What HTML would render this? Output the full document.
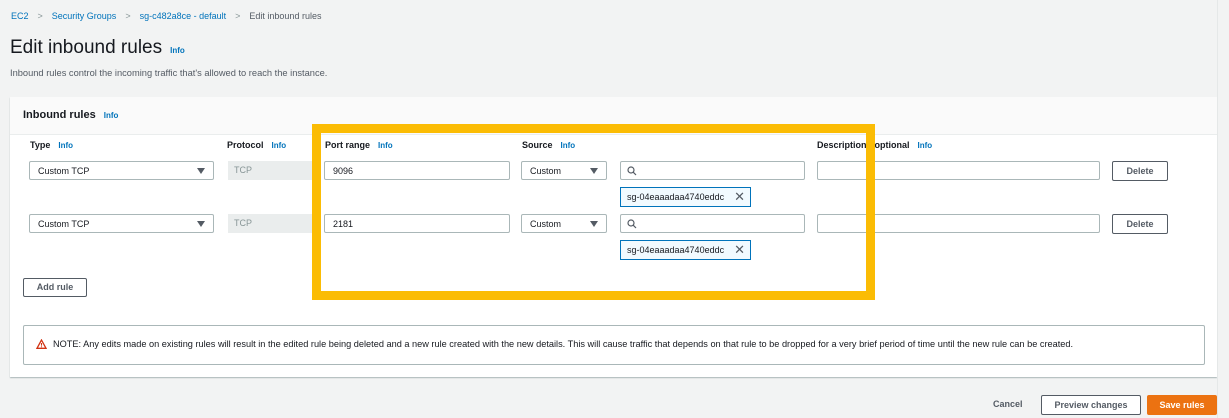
<!DOCTYPE html>
<html><head><meta charset="utf-8"><style>
*{box-sizing:border-box;margin:0;padding:0}
body{width:1229px;height:418px;background:#f2f3f3;font-family:"Liberation Sans",sans-serif;color:#16191f;position:relative;overflow:hidden;font-size:9px}
.a{position:absolute}
.lnk{color:#0073bb}
.info{color:#0073bb;font-size:8px;font-weight:bold;margin-left:8px}
.lbl{font-weight:bold;font-size:9px}
.inp{position:absolute;height:19px;border:1px solid #aab7b8;background:#fff;border-radius:2px;padding-left:8px;line-height:18px;font-size:9px}
.sel::after{content:"";position:absolute;right:8px;top:6px;border-left:4px solid transparent;border-right:4px solid transparent;border-top:6px solid #545b64}
.tok{position:absolute;height:20px;border:1px solid #0073bb;background:#f1faff;padding-left:6px;line-height:18px;font-size:9px;width:131px}
.tok span{position:absolute;right:5px;top:0;font-size:13px;color:#545b64}
.btn{position:absolute;border:1px solid #545b64;background:#fff;font-weight:bold;font-size:9px;text-align:center;color:#545b64;border-radius:2px}
</style></head><body>
<div class="a" style="left:11px;top:11px;font-size:9px"><span class="lnk">EC2</span><span style="color:#879596;margin:0 9px">&gt;</span><span class="lnk">Security Groups</span><span style="color:#879596;margin:0 9px">&gt;</span><span class="lnk">sg-c482a8ce - default</span><span style="color:#879596;margin:0 9px">&gt;</span><span style="color:#545b64">Edit inbound rules</span></div>
<div class="a" style="left:10px;top:37px;font-size:19px">Edit inbound rules<span class="info">Info</span></div>
<div class="a" style="left:10px;top:68px;font-size:9.3px;color:#545b64">Inbound rules control the incoming traffic that's allowed to reach the instance.</div>

<div class="a" style="left:10px;top:97px;width:1207px;height:280px;background:#fff;box-shadow:0 1px 1px #aab7b8">
 <div style="height:38px;background:#fafafa;border-bottom:1px solid #eaeded"></div>
</div>
<div class="a" style="left:1217px;top:0;width:1px;height:418px;background:#e5e8e8"></div>
<div class="a lbl" style="left:23px;top:109px;font-size:11px">Inbound rules<span class="info">Info</span></div>

<div class="a lbl" style="left:30px;top:140px">Type<span class="info">Info</span></div>
<div class="a lbl" style="left:227px;top:140px">Protocol<span class="info">Info</span></div>
<div class="a lbl" style="left:325px;top:140px">Port range<span class="info">Info</span></div>
<div class="a lbl" style="left:522px;top:140px">Source<span class="info">Info</span></div>
<div class="a lbl" style="left:817px;top:140px">Description - optional<span class="info">Info</span></div>

<div class="inp sel" style="left:29px;top:161px;width:185px">Custom TCP</div>
<div class="a" style="left:228px;top:161px;width:84px;height:19px;background:#eaeded;color:#879596;padding-left:6px;line-height:19px">TCP</div>
<div class="inp" style="left:324px;top:161px;width:186px">9096</div>
<div class="inp sel" style="left:521px;top:161px;width:86px">Custom</div>
<div class="inp" style="left:620px;top:161px;width:185px"><svg width="10" height="10" viewBox="0 0 10 10" style="position:absolute;left:6px;top:4px"><circle cx="4" cy="4" r="3" fill="none" stroke="#545b64" stroke-width="1.2"/><path d="M6.2 6.2L9 9" stroke="#545b64" stroke-width="1.2"/></svg></div>
<div class="tok" style="left:620px;top:187px">sg-04eaaadaa4740eddc<span>✕</span></div>
<div class="inp" style="left:817px;top:161px;width:283px"></div>
<div class="btn" style="left:1112px;top:161px;width:56px;height:20px;line-height:18px">Delete</div>

<div class="inp sel" style="left:29px;top:214px;width:185px">Custom TCP</div>
<div class="a" style="left:228px;top:214px;width:84px;height:19px;background:#eaeded;color:#879596;padding-left:6px;line-height:19px">TCP</div>
<div class="inp" style="left:324px;top:214px;width:186px">2181</div>
<div class="inp sel" style="left:521px;top:214px;width:86px">Custom</div>
<div class="inp" style="left:620px;top:214px;width:185px"><svg width="10" height="10" viewBox="0 0 10 10" style="position:absolute;left:6px;top:4px"><circle cx="4" cy="4" r="3" fill="none" stroke="#545b64" stroke-width="1.2"/><path d="M6.2 6.2L9 9" stroke="#545b64" stroke-width="1.2"/></svg></div>
<div class="tok" style="left:620px;top:240px">sg-04eaaadaa4740eddc<span>✕</span></div>
<div class="inp" style="left:817px;top:214px;width:283px"></div>
<div class="btn" style="left:1112px;top:214px;width:56px;height:20px;line-height:18px">Delete</div>

<div class="btn" style="left:23px;top:278px;width:64px;height:19px;line-height:17px">Add rule</div>

<div class="a" style="left:312px;top:124px;width:563px;height:176px;border:9px solid #fbbc04"></div>

<div class="a" style="left:23px;top:325px;width:1182px;height:40px;border:1px solid #aab7b8;border-radius:2px;background:#fff"></div>
<svg class="a" style="left:36px;top:339px" width="11" height="10" viewBox="0 0 11 10"><path d="M5.5 1L10 9.3H1Z" fill="none" stroke="#d13212" stroke-width="1.3"/><path d="M5.5 4v2.6M5.5 7.4v.9" stroke="#d13212" stroke-width="1.1"/></svg>
<div class="a" style="left:53px;top:339px;font-size:9.2px;white-space:nowrap">NOTE: Any edits made on existing rules will result in the edited rule being deleted and a new rule created with the new details. This will cause traffic that depends on that rule to be dropped for a very brief period of time until the new rule can be created.</div>

<div class="a" style="left:993px;top:399px;font-weight:bold;color:#545b64;font-size:9px">Cancel</div>
<div class="btn" style="left:1041px;top:395px;width:100px;height:20px;line-height:18px">Preview changes</div>
<div class="a" style="left:1147px;top:395px;width:70px;height:20px;line-height:20px;background:#ec7211;color:#fff;font-weight:bold;text-align:center;border-radius:2px">Save rules</div>
</body></html>
